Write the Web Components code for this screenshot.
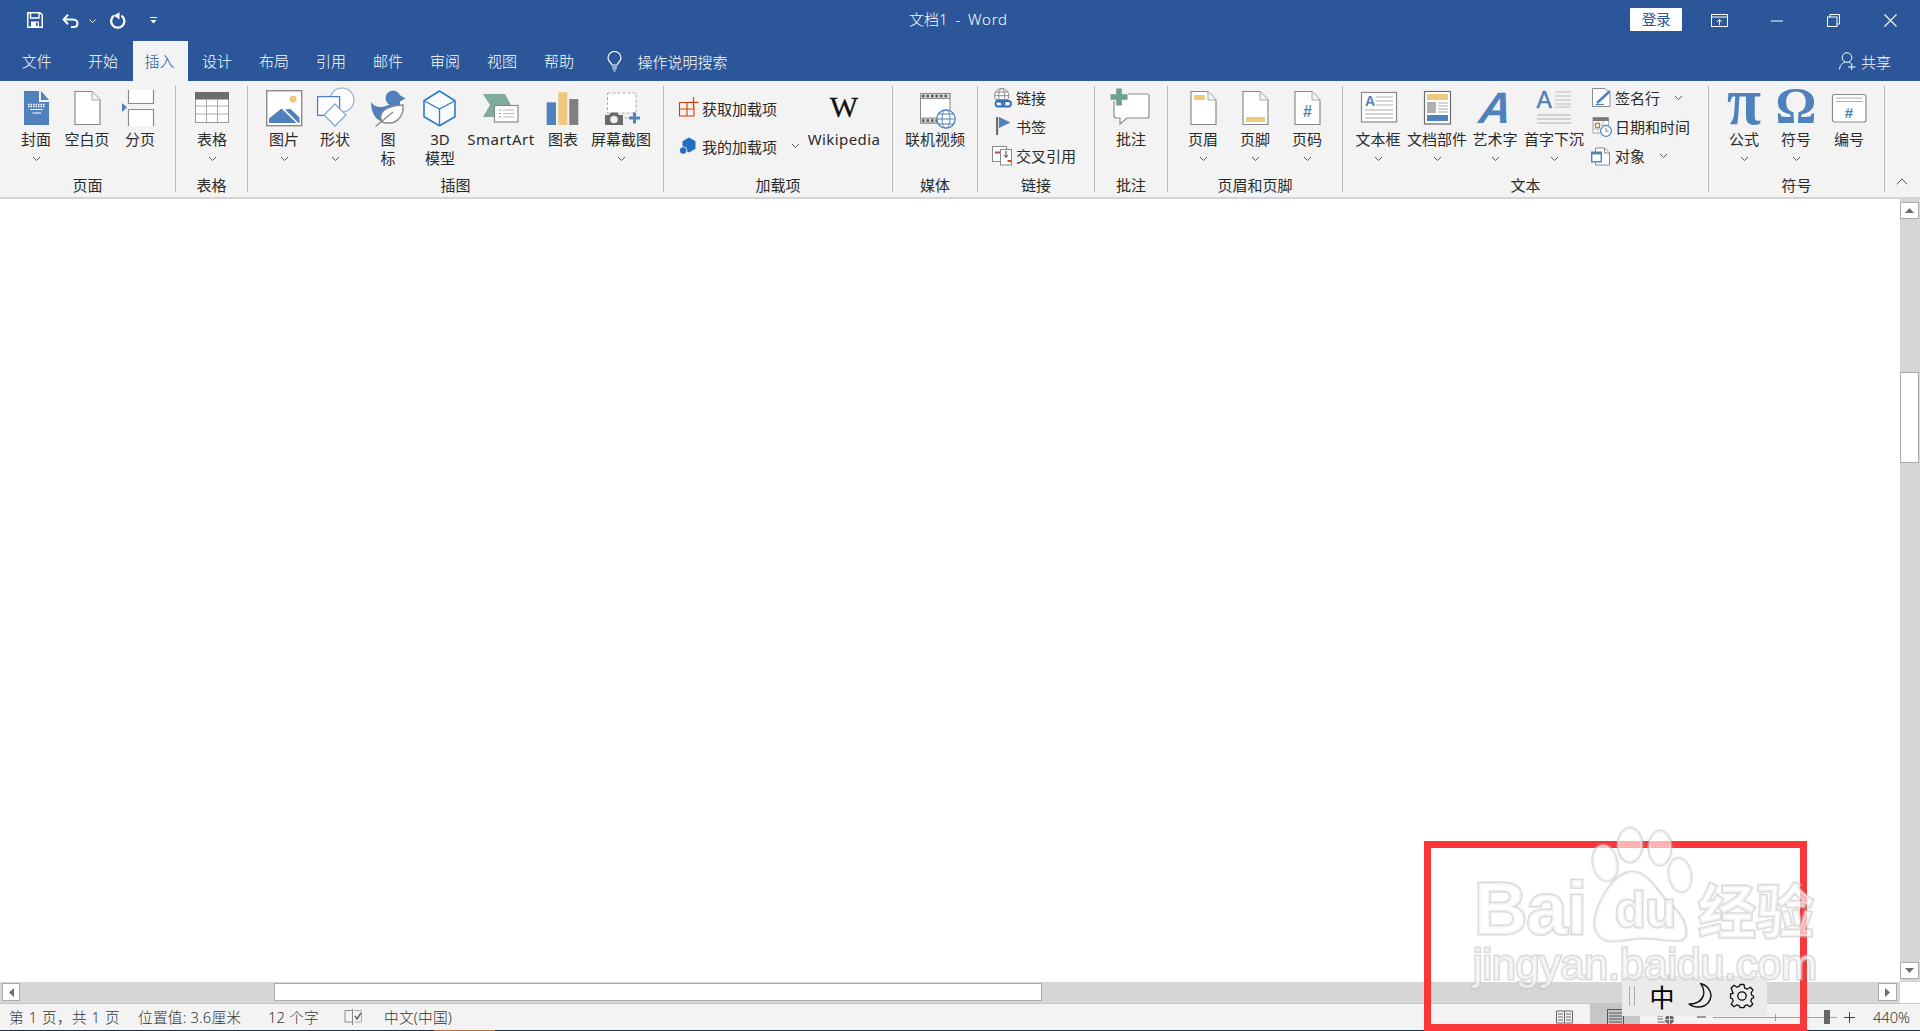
<!DOCTYPE html>
<html lang="zh"><head><meta charset="utf-8"><title>文档1 - Word</title>
<style>
html,body{margin:0;padding:0;background:#fff}
body{font-family:"Noto Sans","Noto Sans CJK SC",sans-serif;font-size:15px;color:#2a2a2a;overflow:hidden}
</style></head><body>
<word-app>
  <word-titlebar>文档1&nbsp; - &nbsp;<span style="letter-spacing:.8px">Word</span></word-titlebar>
  <word-tabs></word-tabs>
  <word-ribbon>
    <rb-group w="176" title="页面" pad="10">
      <rb-btn icon="cover" w="52" chev>封面</rb-btn><rb-btn icon="blank" w="50">空白页</rb-btn><rb-btn icon="pagebreak" w="56">分页</rb-btn>
    </rb-group>
    <rb-group w="72" title="表格" pad="10"><rb-btn icon="table" w="52" chev>表格</rb-btn></rb-group>
    <rb-group w="416" title="插图" pad="11">
      <rb-btn icon="picture" w="50" chev>图片</rb-btn><rb-btn icon="shapes" w="52" chev>形状</rb-btn><rb-btn icon="duck" w="54">图<br>标</rb-btn><rb-btn icon="cube" w="50">3D<br>模型</rb-btn><rb-btn icon="smartart" w="72"><span style="letter-spacing:.5px">SmartArt</span></rb-btn><rb-btn icon="chart" w="52">图表</rb-btn><rb-btn icon="shot" w="64" chev>屏幕截图</rb-btn>
    </rb-group>
    <rb-group w="229" title="加载项" pad="0">
      <rb-col w="142" left="15" top="3">
        <rb-small icon="getadd" h="38" iw="23">获取加载项</rb-small>
        <rb-small icon="myadd" h="38" iw="23" chev="14">我的加载项</rb-small>
      </rb-col>
      <rb-btn icon="wiki" w="76"><span style="letter-spacing:.4px">Wikipedia</span></rb-btn>
    </rb-group>
    <rb-group w="85" title="媒体" pad="7"><rb-btn icon="video" w="70">联机视频</rb-btn></rb-group>
    <rb-group w="117" title="链接" pad="14">
      <rb-col w="100" left="0" top="-3">
        <rb-small icon="link" h="29" iw="24">链接</rb-small>
        <rb-small icon="bookmark" h="29" iw="24">书签</rb-small>
        <rb-small icon="xref" h="29" iw="24">交叉引用</rb-small>
      </rb-col>
    </rb-group>
    <rb-group w="73" title="批注" pad="11"><rb-btn icon="comment" w="50">批注</rb-btn></rb-group>
    <rb-group w="175" title="页眉和页脚" pad="9">
      <rb-btn icon="header" w="52" chev>页眉</rb-btn><rb-btn icon="footer" w="52" chev>页脚</rb-btn><rb-btn icon="pagenum" w="52" chev>页码</rb-btn>
    </rb-group>
    <rb-group w="366" title="文本" pad="8">
      <rb-btn icon="textbox" w="54" chev>文本框</rb-btn><rb-btn icon="parts" w="64" chev>文档部件</rb-btn><rb-btn icon="wordart" w="52" chev>艺术字</rb-btn><rb-btn icon="dropcap" w="66" chev>首字下沉</rb-btn>
      <rb-col w="118" left="4" top="-3">
        <rb-small icon="sign" h="29" iw="24" chev="14">签名行</rb-small>
        <rb-small icon="datetime" h="29" iw="24">日期和时间</rb-small>
        <rb-small icon="object" h="29" iw="24" chev="14">对象</rb-small>
      </rb-col>
    </rb-group>
    <rb-group w="176" title="符号" pad="10">
      <rb-btn icon="pi" w="50" chev>公式</rb-btn><rb-btn icon="omega" w="54" chev>符号</rb-btn><rb-btn icon="number" w="52">编号</rb-btn>
    </rb-group>
  </word-ribbon>
  <word-doc></word-doc>
  <word-hscroll></word-hscroll>
  <word-status></word-status>
  <word-edge></word-edge>
  <red-box></red-box>
  <ime-bar></ime-bar>
  <baidu-mark></baidu-mark>
</word-app>
<script>
const B='#4f81bd',G='#8a8a8a',Y='#edc87e',O='#d83b01';
const pageSvg=(x,inner='')=>`<path d="M${x} 6.5H${x+17}L${x+25} 15V39.5H${x}Z" fill="#fff" stroke="${G}" stroke-width="1.2"/><path d="M${x+17} 6.5V15H${x+25}" fill="#f3f3f3" stroke="#a8a8a8"/>${inner}`;
const lg=s=>`<svg width="48" height="45" viewBox="0 0 48 45" style="overflow:visible">${s}</svg>`;
const sm=s=>`<svg width="24" height="24" viewBox="0 0 24 24" style="overflow:visible">${s}</svg>`;
const lines=(x1,x2,ys,c='#b0b0b0')=>ys.map(y=>`<path d="M${x1} ${y}H${x2}" stroke="${c}" stroke-width="1"/>`).join('');
const hash=(x,y,s)=>`<text x="${x}" y="${y}" font-family="Liberation Sans" font-weight="700" font-size="${s}" fill="${B}" text-anchor="middle">#</text>`;
const ICONS={
cover:lg(`<path d="M12 6H27V17H37V40H12Z" fill="${B}"/><path d="M29 6L37 15H29Z" fill="${B}"/><path d="M16 19.5H33M16 21.5H33" stroke="#fff" stroke-width="1.6" stroke-dasharray="1.5 1"/><path d="M18 24.5H31M20.5 28H29" stroke="#fff" stroke-width="1"/>`),
blank:lg(pageSvg(12)),
pagebreak:lg(`<path d="M12.5 5V18.5H37.5V5" fill="#fff" stroke="${G}" stroke-width="1.2"/><path d="M12.5 41V24.5H37.5V41" fill="#fff" stroke="${G}" stroke-width="1.2"/><path d="M6 18V27L11 22.5Z" fill="${B}"/>`),
table:lg(`<rect x="7.5" y="7.5" width="33" height="30" fill="#fff" stroke="#9a9a9a"/><rect x="7" y="7" width="34" height="7.5" fill="#6d6d6d"/>${lines(8,40,[21,29],'#a8a8a8')}<path d="M18.5 14V37M29.5 14V37" stroke="#a8a8a8"/>`),
picture:lg(`<rect x="6.7" y="5.7" width="35" height="35" fill="#fff" stroke="${G}" stroke-width="1.4"/><circle cx="33" cy="14" r="3.6" fill="${Y}"/><path d="M9 38V33.5L21.5 23.5L36.5 38Z" fill="${B}"/><path d="M25 24.5L30.5 24L39.5 32.5V38H38.5Z" fill="${B}"/>`),
shapes:lg(`<circle cx="31" cy="15" r="12" fill="#fff" stroke="#82a8d2" stroke-width="1.1"/><rect x="6.6" y="11.6" width="22" height="18.8" fill="#fff" stroke="${B}" stroke-width="1.3"/><path d="M24 19L35 30L24 41L13 30Z" fill="#fff" stroke="#82a8d2" stroke-width="1.3"/>`),
duck:lg(`<circle cx="29" cy="13" r="7.5" fill="${B}"/><path d="M34 9L41.5 13.5L34 17.5Z" fill="${B}"/><path d="M7 17C10 22 16 23 22 21L36 15C37 30 28 38 20 37C12 36 7 28 7 17Z" fill="${B}"/><path d="M18 37C14 28 20 21 39 20C40 30 34 38 25 38C22 38 20 38 18 37Z" fill="#fff" stroke="${G}" stroke-width="1.4"/><path d="M11.5 41.5L29 27" stroke="${G}" stroke-width="1.4"/>`),
cube:lg(`<path d="M23.5 6L39 15.7V31.7L23.5 40.7L8 31.7V15.7Z" fill="#f9fafc" stroke="#2d7cc6" stroke-width="1.6" stroke-linejoin="round"/><path d="M8 15.7L23.5 24L39 15.7M23.5 24V40.7" fill="none" stroke="#2d7cc6" stroke-width="1.3"/>`),
smartart:lg(`<path d="M6 9H28L34 20V23L28 32H6L13 20Z" fill="#7fab9b"/><rect x="17.5" y="20.5" width="23.5" height="16.5" fill="#fff" stroke="${G}" stroke-width="1.2"/><path d="M22 25H24M22 28.5H24M22 32H24" stroke="#999"/><path d="M26 25H37M26 28.5H37M26 32H37" stroke="#bbb"/>`),
chart:lg(`<rect x="7.7" y="17.3" width="9.3" height="22.7" fill="${B}"/><rect x="19.3" y="7.3" width="9" height="32.7" fill="${Y}"/><rect x="30.3" y="14" width="9" height="26" fill="#7f7f7f"/>`),
shot:lg(`<rect x="10.5" y="8" width="28.5" height="20" fill="#fff" stroke="#aaa" stroke-dasharray="3 2"/><path d="M8 30H12L14 27.5H20L22 30H26V40H8Z" fill="#6a6a6a"/><circle cx="17" cy="34.5" r="3.5" fill="#f3f3f3" stroke="#ddd"/><path d="M27.5 33H30.5" stroke="#aaa"/><path d="M32 33H43M37.5 27.5V38.5" stroke="${B}" stroke-width="3"/>`),
wiki:`<div style="height:45px;width:48px;text-align:center;font:400 30px/43px 'Liberation Serif',serif;color:#111;-webkit-text-stroke:.3px #111">W</div>`,
video:lg(`<rect x="9.5" y="8.5" width="29.5" height="29.5" fill="#fff" stroke="${G}"/><rect x="9.5" y="8.5" width="29.5" height="5" fill="#d8d8d8" stroke="${G}"/><rect x="9.5" y="33" width="29.5" height="5" fill="#d8d8d8" stroke="${G}"/><path d="M11 11H37M11 35.5H37" stroke="#555" stroke-width="2.6" stroke-dasharray="2.5 2"/><circle cx="35" cy="34" r="9.2" fill="#fff" stroke="${B}" stroke-width="1.3"/><ellipse cx="35" cy="34" rx="4" ry="9.2" fill="none" stroke="${B}"/><path d="M26 34H44M27.5 29H42.5M27.5 39H42.5" stroke="${B}"/>`),
comment:lg(`<path d="M9 9H40Q42 9 42 11V31Q42 33 40 33H20L13 39V33H9Q7 33 7 31V11Q7 9 9 9Z" fill="#fff" stroke="${G}" stroke-width="1.2"/><path d="M3 12H21M12 3.5V20.5" stroke="#f3f3f3" stroke-width="8"/><path d="M3.5 12H20.5M12 3.5V20.5" stroke="#6ea08f" stroke-width="5.6"/>`),
header:lg(pageSvg(12,`<rect x="15" y="10" width="11" height="5" fill="${Y}"/>`)),
footer:lg(pageSvg(12,`<rect x="15" y="32" width="19" height="5" fill="${Y}"/>`)),
pagenum:lg(pageSvg(12,hash(24.5,32,16))),
textbox:lg(`<rect x="7.5" y="7.5" width="35" height="29.5" fill="#fff" stroke="${G}" stroke-width="1.2"/><text x="11" y="21" font-family="Liberation Sans" font-weight="700" font-size="14" fill="${B}">A</text>${lines(22,39,[12,16,20],'#b0b0b0')}${lines(11,39,[25,29,33],'#a8a8a8')}`),
parts:lg(`<rect x="11.5" y="6.5" width="26" height="32.5" fill="#fff" stroke="#6d6d6d" stroke-width="1.2"/><rect x="14" y="9" width="21" height="6" fill="${Y}"/><rect x="14" y="17" width="9" height="11" fill="#b0b0b0"/>${lines(25,35,[18,21,24,27],'#a8a8a8')}<rect x="14" y="30" width="21" height="6" fill="${B}"/>`),
wordart:lg(`<text x="23" y="38" text-anchor="middle" font-family="Liberation Sans" font-style="italic" font-weight="700" font-size="44" fill="${B}" transform="skewX(-8) translate(5 0)">A</text>`),
dropcap:lg(`<text x="6.5" y="22.5" font-family="Liberation Sans" font-weight="400" font-size="23" fill="${B}" stroke="${B}" stroke-width=".5">A</text>${lines(25,41,[7,11,15,19,22],'#bdbdbd')}${lines(7,41,[30,34,38],'#b0b0b0')}`),
pi:`<div style="height:45px;width:48px;text-align:center;font:700 62px/33px 'Liberation Serif',serif;color:${B}"><span style="display:inline-block;transform:scaleY(1.1)">π</span></div>`,
omega:`<div style="height:45px;width:48px;text-align:center;font:700 51px/40px 'Liberation Serif',serif;color:${B}">Ω</div>`,
number:lg(`<rect x="7.5" y="9.5" width="33.5" height="27.5" rx="2" fill="#fff" stroke="${G}" stroke-width="1.2"/>${lines(11,37.5,[13,16.5],'#b0b0b0')}${hash(24,33,15)}`),
getadd:sm(`<path d="M10 6.5H.5V20H15V10M.5 13H15M8 6.5V20" fill="none" stroke="${O}" stroke-width="1.1"/><path d="M9.5 6.3H19.5M14.5 1.3V11.3" stroke="${O}" stroke-width="1.2"/>`),
myadd:sm(`<path d="M10 3.5L16.5 7.2V14.8L10 18.5L3.5 14.8V7.2Z" fill="#1f6fc4"/><circle cx="4.2" cy="16.5" r="4" fill="#f3f3f3"/><circle cx="4.2" cy="16.5" r="3.2" fill="#1f6fc4"/>`),
link:sm(`<circle cx="9.7" cy="9.7" r="7.2" fill="#fff" stroke="${G}"/><ellipse cx="9.7" cy="9.7" rx="3" ry="7.2" fill="none" stroke="${G}"/><path d="M2.5 9.7H17M3.7 6H15.7M3.7 13.5H15.7" stroke="${G}"/><rect x="3.5" y="15" width="9" height="5.5" rx="2.7" fill="none" stroke="#2f6fb5" stroke-width="1.8"/><rect x="10" y="15" width="9" height="5.5" rx="2.7" fill="none" stroke="#2f6fb5" stroke-width="1.8"/>`),
bookmark:sm(`<rect x="4" y="2" width="2.2" height="18" fill="#6d6d6d"/><path d="M7 2L18.5 7.5L7 13Z" fill="${B}"/>`),
xref:sm(`<rect x=".5" y="2.5" width="14" height="15" fill="#fff" stroke="${G}"/><rect x="8.5" y="5.5" width="11" height="15.5" fill="#fff" stroke="${G}"/><path d="M3 8.5H8M15.5 17H19.5" stroke="#d24726" stroke-width="1.8"/><path d="M14 7V13M12 11L14 13.5L16 11" fill="none" stroke="#444"/>`),
sign:sm(`<path d="M1.5 2.5H14L19 7.5V20.5H1.5Z" fill="#fff" stroke="${G}"/><path d="M6 17L19 5" stroke="${B}" stroke-width="2.6"/><path d="M4.5 18.5H13" stroke="${B}" stroke-width="1.2"/>`),
datetime:sm(`<rect x="2" y="2.5" width="15.5" height="15.5" fill="#fff" stroke="#a8a8a8"/><rect x="2" y="2.5" width="15.5" height="3.5" fill="#777"/><path d="M7 6V18M12 6V18M2 10H17M2 14H17" stroke="#bdbdbd"/><rect x="4.5" y="8.5" width="4" height="4" fill="#fff" stroke="#d9730d" stroke-width="1.2"/><circle cx="15" cy="16" r="5.4" fill="#fff" stroke="${B}" stroke-width="1.2"/><path d="M15 13V16.2H17.5" fill="none" stroke="${B}"/>`),
object:sm(`<path d="M4.5 4H13.5L18.5 9V21H4.5Z" fill="#fff" stroke="${G}"/><path d="M13.5 4V9H18.5" fill="none" stroke="${G}"/><rect x=".7" y="8.2" width="9.6" height="9.6" fill="#fff" stroke="${B}" stroke-width="1.4"/><rect x=".7" y="8.2" width="9.6" height="2.2" fill="${B}"/>`),
};
const chevron=`<svg width="9" height="6" viewBox="0 0 9 6"><path d="M1 1L4.5 4.5L8 1" fill="none" stroke="#5a5a5a" stroke-width="1"/></svg>`;
class SE extends HTMLElement{
  constructor(){super();this.attachShadow({mode:'open'});}
  connectedCallback(){this.shadowRoot.innerHTML=this.render();}
}
customElements.define('word-app',class extends SE{render(){return `<style>:host{display:flex;flex-direction:column;width:1920px;height:1031px;position:relative;overflow:hidden}</style><slot></slot>`}});
customElements.define('word-titlebar',class extends SE{render(){return `<style>
:host{display:grid;grid-template-columns:1fr auto 1fr;align-items:center;height:41px;background:#2b579a;color:#fff;font-size:15px;flex:none}
.l,.r{display:flex;align-items:center;height:41px}
.l{padding-left:27px}.r{justify-content:flex-end;padding-right:23px}
svg{display:block;flex:none}.t{margin:-4px 3px 0 0;font-weight:300}
.login{width:52px;height:23px;background:#fff;color:#2b579a;border-radius:1px;text-align:center;line-height:23px;font-size:14.7px;margin:-2px 29px 0 0;letter-spacing:-.4px}
</style>
<div class="l">
<svg width="16" height="16" viewBox="0 0 16 16" style="margin-top:-1px"><path d="M.75.75H13L15.25 3V15.25H.75Z" fill="none" stroke="#fff" stroke-width="1.5"/><path d="M3.5 1V6H12V1" fill="none" stroke="#fff" stroke-width="1.4"/><path d="M4 15V9.5H12V15" fill="#fff"/><rect x="9" y="10.5" width="1.6" height="3.5" fill="#2b579a"/></svg>
<svg width="17" height="14" viewBox="0 0 17 14" style="margin-left:19px"><path d="M2 5.5H11C14 5.5 15.5 7.5 15.5 9.5C15.5 11.5 14 13 11.5 13H9" fill="none" stroke="#fff" stroke-width="2"/><path d="M6 .8L1.6 5.5L6 10.2" fill="none" stroke="#fff" stroke-width="2"/></svg>
<svg width="7" height="4" viewBox="0 0 7 4" style="margin-left:10px"><path d="M.5.5L3.5 3.5L6.5.5" fill="none" stroke="#e6ecf5"/></svg>
<svg width="16" height="17" viewBox="0 0 16 17" style="margin-left:14px"><path d="M11.5 3.6A6.6 6.6 0 1 1 4 3.6" fill="none" stroke="#fff" stroke-width="2.3"/><path d="M9.5.3V7.5L3.8 3.5Z" fill="#fff"/></svg>
<svg width="7" height="7" viewBox="0 0 7 7" style="margin-left:24px"><path d="M0 .5H7" stroke="#fff"/><path d="M.5 3L3.5 6.5L6.5 3Z" fill="#fff"/></svg>
</div>
<div class="t"><slot></slot></div>
<div class="r">
<div class="login">登录</div>
<svg width="17" height="13" viewBox="0 0 17 13"><rect x=".5" y=".5" width="16" height="12" fill="none" stroke="#fff"/><path d="M.5 3H16.5" stroke="#fff"/><path d="M8.5 11V5.5M6 8L8.5 5.5L11 8" fill="none" stroke="#fff"/></svg>
<svg width="12" height="2" viewBox="0 0 12 2" style="margin-left:43px"><path d="M0 1H12" stroke="#fff"/></svg>
<svg width="13" height="13" viewBox="0 0 13 13" style="margin-left:44px"><rect x=".5" y="3" width="9.5" height="9.5" fill="none" stroke="#fff"/><path d="M3 3V.5H12.5V10H10" fill="none" stroke="#fff"/></svg>
<svg width="13" height="13" viewBox="0 0 13 13" style="margin-left:44px"><path d="M.5.5L12.5 12.5M12.5.5L.5 12.5" stroke="#fff" stroke-width="1.1"/></svg>
</div>`}});
customElements.define('word-tabs',class extends SE{render(){
const names=['开始','插入','设计','布局','引用','邮件','审阅','视图','帮助'];
return `<style>
:host{display:flex;align-items:stretch;height:40px;background:#2b579a;color:#fff;flex:none;font-weight:300;font-size:15px;position:relative}
.t{width:57px;text-align:center;line-height:40px}.f{width:74.5px;padding-right:1px;box-sizing:border-box}
.on{background:#f3f3f3;color:#2b579a;width:55px;margin:0 1px;padding-right:1px;box-sizing:border-box}
.s{display:flex;align-items:center;margin-left:19px;flex:1}
.s span{margin-left:16px}
.share{display:flex;align-items:center;padding-right:29px}.share span{margin-left:5px}
svg{display:block}
</style><div class="t f">文件</div>${names.map(n=>`<div class="t ${n=='插入'?'on':''}">${n}</div>`).join('')}
<div class="s"><svg width="15" height="21" viewBox="0 0 15 21"><path d="M4.8 14C4.5 11.5 1 10.5 1 7A6.5 6.5 0 0 1 14 7C14 10.5 10.5 11.5 10.2 14Z" fill="none" stroke="#fff" stroke-width="1.2"/><path d="M5 16H10M5.5 18H9.5M6.5 20H8.5" stroke="#fff" stroke-width="1.2"/></svg><span>操作说明搜索</span></div>
<div class="share"><svg width="17" height="18" viewBox="0 0 17 18"><circle cx="8" cy="5.5" r="4.8" fill="none" stroke="#fff"/><path d="M.5 17.5C1 13 3.5 11 6 10M10 10.5L11.5 11" fill="none" stroke="#fff"/><path d="M9 15H16.5M12.7 11.2V18" stroke="#fff"/></svg><span>共享</span></div>`}});
customElements.define('word-ribbon',class extends SE{render(){return `<style>
:host{display:flex;align-items:flex-start;padding-top:5px;height:111px;background:#f3f3f3;border-bottom:2px solid #d4d4d4;flex:none}
.c{margin-left:auto;padding-right:12px;align-self:flex-end;height:19px}
</style><slot></slot><div class="c"><svg width="12" height="7" viewBox="0 0 12 7" style="display:block"><path d="M.7 6.3L6 1L11.3 6.3" fill="none" stroke="#5a5a5a"/></svg></div>`}});
customElements.define('rb-group',class extends SE{render(){return `<style>
:host{display:flex;flex-direction:column;box-sizing:border-box;height:106px;width:${this.getAttribute('w')}px;border-right:1px solid #b8b8b8;flex:none}
.c{display:flex;height:91px;padding-left:${this.getAttribute('pad')}px}
.l{height:15px;line-height:16px;text-align:center;font-size:15px;white-space:nowrap}
</style><div class="c"><slot></slot></div><div class="l">${this.getAttribute('title')}</div>`}});
customElements.define('rb-btn',class extends SE{render(){return `<style>
:host{display:flex;flex-direction:column;align-items:center;width:${this.getAttribute('w')}px;flex:none;line-height:19.3px;position:relative}
.i{height:44px;width:48px;display:flex;justify-content:center}
.i>*{margin-top:-1px;flex:none}
.t{text-align:center;white-space:nowrap}
.ch{height:19px;display:flex;align-items:center;justify-content:center}
svg{display:block}
</style><div class="i">${ICONS[this.getAttribute('icon')]}</div><div class="t"><slot></slot></div>${this.hasAttribute('chev')?`<div class="ch">${chevron}</div>`:''}`}});
customElements.define('rb-col',class extends SE{render(){return `<style>
:host{display:flex;flex-direction:column;flex:none;box-sizing:border-box;width:${this.getAttribute('w')}px;padding-left:${this.getAttribute('left')}px;margin-top:${this.getAttribute('top')}px}
</style><slot></slot>`}});
customElements.define('rb-small',class extends SE{render(){const c=this.getAttribute('chev');return `<style>
:host{display:flex;align-items:center;height:${this.getAttribute('h')}px;white-space:nowrap}
.i{width:${this.getAttribute('iw')}px;flex:none;height:24px}svg{display:block}
.ch{margin-left:${c}px;display:flex}
</style><div class="i">${ICONS[this.getAttribute('icon')]}</div><slot></slot>${c?`<div class="ch">${chevron}</div>`:''}`}});
const btn=(w,h,arrow)=>`<div style="width:${w}px;height:${h}px;box-sizing:border-box;background:#fff;border:1px solid #ababab;display:flex;align-items:center;justify-content:center;flex:none">${arrow}</div>`;
customElements.define('word-doc',class extends SE{render(){return `<style>
:host{display:flex;flex:1;min-height:0;background:#fff}
.d{flex:1}
.v{width:20px;box-sizing:border-box;background:#d6d6d6;display:flex;flex-direction:column;padding:3px 1px 3px 0}
.th{margin-top:153px}.sp{flex:1}svg{display:block}
</style><div class="d"></div><div class="v">
${btn(19,17,`<svg width="9" height="5" viewBox="0 0 9 5"><path d="M4.5 0L9 5H0Z" fill="#6d6d6d"/></svg>`)}
<div class="th">${btn(19,91,'')}</div><div class="sp"></div>
${btn(19,17,`<svg width="9" height="5" viewBox="0 0 9 5"><path d="M4.5 5L9 0H0Z" fill="#6d6d6d"/></svg>`)}
</div>`}});
customElements.define('word-hscroll',class extends SE{render(){return `<style>
:host{display:flex;height:21px;flex:none;background:#fff}
.h{width:1900px;box-sizing:border-box;background:#d6d6d6;display:flex;padding:1px 3px 2px 2px;border-bottom:0}
.th{margin-left:254px}.sp{flex:1}svg{display:block}
</style><div class="h">
${btn(18,18,`<svg width="5" height="9" viewBox="0 0 5 9"><path d="M0 4.5L5 0V9Z" fill="#6d6d6d"/></svg>`)}
<div class="th">${btn(768,18,'')}</div><div class="sp"></div>
${btn(19,18,`<svg width="5" height="9" viewBox="0 0 5 9"><path d="M5 4.5L0 0V9Z" fill="#6d6d6d"/></svg>`)}
</div>`}});
customElements.define('word-status',class extends SE{render(){return `<style>
:host{display:flex;align-items:center;height:27px;box-sizing:border-box;border-top:1px solid #c6c6c6;background:#f3f3f3;flex:none;font-size:14.7px;font-weight:300;white-space:nowrap;color:#333}
svg{display:block;flex:none}
.a,.b,.c,.e{margin-top:-2px;letter-spacing:.2px}
.a{margin-left:9px;width:129px;word-spacing:.8px}.b{width:131px}.c{width:75px;margin-left:-1px;padding-right:1px}.e{margin-left:22px;width:1172px}
.act{width:50px;height:26px;background:#c6c6c6;display:flex;align-items:center;justify-content:center;margin-left:17px}
.z{margin-left:auto;padding-right:10px;font-size:14.7px}
.sl{width:124px;height:1px;background:#a0a0a0;margin-left:7px;display:flex;position:relative;flex:none}
.sl i{display:block;width:1px;height:7px;background:#a0a0a0;margin:-3px 0 0 62px}
.sl b{display:block;width:6px;height:14px;background:#666;margin:-7px 0 0 48px}
</style>
<div class="a">第 1 页，共 1 页</div><div class="b">位置值: 3.6厘米</div><div class="c">12 个字</div>
<svg width="18" height="16" viewBox="0 0 18 16"><path d="M8.5 1.5H1V13H8.5M8.5 0V16" fill="none" stroke="#888"/><path d="M10.5 1.5H17.5V13H10.5" fill="none" stroke="#aaa"/><path d="M11 7L13 10L17 4" fill="none" stroke="#666" stroke-width="1.5"/></svg>
<div class="e">中文(中国)</div>
<svg width="17" height="14" viewBox="0 0 17 14"><path d="M.5 1H8.5V13H.5ZM8.5 1H16.5V13H8.5Z" fill="none" stroke="#666"/><path d="M2 4H7M2 7H7M2 10H7M10 4H15M10 7H15M10 10H15" stroke="#666"/></svg>
<div class="act"><svg width="17" height="16" viewBox="0 0 17 16"><rect x=".5" y=".5" width="16" height="15" fill="none" stroke="#555"/><path d="M2 4H15M2 7H15M2 10H15M2 13H15" stroke="#555"/></svg></div>
<svg width="17" height="16" viewBox="0 0 17 16" style="margin-left:17px"><path d="M.5 4H8M.5 7H6M.5 10H6M.5 13H8" stroke="#666"/><circle cx="12.5" cy="10.5" r="4.5" fill="#666"/><path d="M8 10.5H17M12.5 6V15" stroke="#f3f3f3" stroke-width=".8"/></svg>
<svg width="9" height="2" viewBox="0 0 9 2" style="margin-left:23px"><path d="M0 1H9" stroke="#444"/></svg>
<div class="sl"><i></i><b></b></div>
<svg width="11" height="11" viewBox="0 0 11 11" style="margin-left:7px"><path d="M0 5.5H11M5.5 0V11" stroke="#444"/></svg>
<div class="z">440%</div>`}});
customElements.define('word-edge',class extends SE{render(){return `<style>:host{display:flex;height:1px;background:#1d2c3a;flex:none}
.o{width:61px;background:#c3703a;margin-left:434px}</style><div class="o"></div>`}});
customElements.define('red-box',class extends SE{render(){return `<style>:host{position:absolute;left:1424px;top:841px;width:383px;height:190px;box-sizing:border-box;border:7px solid #fb3638;pointer-events:none}</style>`}});
customElements.define('ime-bar',class extends SE{render(){return `<style>
:host{position:absolute;left:1622px;top:976px;width:145px;height:40px;background:#ebebeb;display:flex;align-items:center;box-sizing:border-box;padding-left:7px}
.g{width:6px;height:20px;border-left:1.5px solid #aaa;border-right:1.5px solid #aaa;box-sizing:border-box}
.z{font:400 25px/1 "Noto Sans CJK SC",sans-serif;color:#000;margin-left:14px;width:26px;text-align:center}
svg{display:block;flex:none}
</style><div class="g"></div><div class="z">中</div>
<svg width="25" height="26" viewBox="0 0 25 26" style="margin-left:13px"><path d="M12.7 .5C22 3 26 13 20 20C15 25.5 6 25 1 21C8 21.5 14 18 15.5 12C16.5 7.5 15 3.5 12.7 .5Z" fill="none" stroke="#111" stroke-width="1.4" stroke-linejoin="round"/></svg>
<svg width="26" height="26" viewBox="0 0 26 26" style="margin-left:16px"><g fill="none" stroke="#111" stroke-width="1.3"><circle cx="13" cy="13" r="4.2"/><path d="M11 1.5H15L15.7 5.1L18.2 6.2L21.3 4.2L24 7L22 10L23 12.5L24.5 13V15L22.6 15.6L21.8 18L23.8 21L21 23.8L18 21.8L15.6 22.8L15 24.7H11L10.4 22.8L8 21.8L5 23.8L2.2 21L4.2 18L3.2 15.6L1.5 15V11L4.2 10.4L3.2 8L2.2 5L5 2.2L8 4.2L10.4 3.2Z" stroke-linejoin="round"/></g></svg>`}});
customElements.define('baidu-mark',class extends SE{render(){return `<style>
:host{position:absolute;left:1460px;top:820px;width:380px;height:180px;pointer-events:none}
svg{display:block;overflow:visible}
.f{fill:rgba(255,255,255,.62);stroke:rgba(195,195,195,.6);stroke-width:3;paint-order:stroke;filter:blur(.35px)}
</style><svg width="380" height="180" viewBox="0 0 380 180">
<ellipse class="f" cx="170" cy="25" rx="12" ry="17"/>
<ellipse class="f" cx="200" cy="28" rx="11" ry="17"/>
<ellipse class="f" cx="145" cy="43" rx="12" ry="18" transform="rotate(-12 145 43)"/>
<ellipse class="f" cx="220" cy="55" rx="11" ry="17" transform="rotate(-10 220 55)"/>
<path class="f" d="M172 52C186 52 194 66 204 78C214 88 226 98 226 112C226 124 214 120 206 120C194 118 184 117 172 119C160 121 152 122 146 120C138 118 132 108 136 94C140 80 154 52 172 52Z"/>
<text class="f" x="155" y="107" font-family="Liberation Sans" font-weight="700" font-size="50">du</text>
<text class="f" x="14" y="114" font-family="Liberation Sans" font-weight="700" font-size="74" textLength="113">Bai</text>
<text class="f" x="238" y="113" font-family="Noto Sans CJK SC" font-weight="700" font-size="58">经验</text>
<text class="f" x="13" y="159" font-family="Liberation Sans" font-size="43" textLength="344">jingyan.baidu.com</text>
</svg>`}});
</script>
</body></html>
